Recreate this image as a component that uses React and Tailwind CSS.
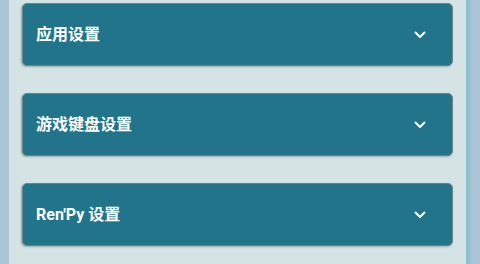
const sections = ["应用设置", "游戏键盘设置", "Ren'Py 设置"]

function Chevron() {
  return (
    <svg width="12" height="8" viewBox="0 0 12 8" fill="none" className="shrink-0">
      <polyline points="1.5,1.5 6,6 10.5,1.5" stroke="#ffffff" strokeWidth="2" strokeLinecap="round" strokeLinejoin="round" />
    </svg>
  )
}

function SettingCard({ title }) {
  return (
    <div className="h-[63px] flex items-center justify-between rounded-[5px] border border-[#6d838f] bg-[#22748b] pl-[13px] pr-[26px] shadow-[-1px_1px_2px_rgba(0,0,0,0.25)]">
      <span className="text-[16px] font-bold text-white leading-none">{title}</span>
      <Chevron />
    </div>
  )
}

export default function App() {
  return (
    <div
      className="w-[480px] h-[264px] flex overflow-hidden"
      style={{ fontFamily: 'Roboto, "Noto Sans CJK SC", sans-serif' }}
    >
      <div className="w-[9px] bg-[#a9c6d7]" />
      <div className="flex-1 bg-[#d4e3e3] pl-[13px] pr-[13px] pt-[3px] flex flex-col gap-[27px]">
        {sections.map((s) => (
          <SettingCard key={s} title={s} />
        ))}
      </div>
      <div className="w-[4px] bg-[#8bc2d2]" />
      <div className="w-[10px] bg-[#a9c6d7]" />
    </div>
  )
}
